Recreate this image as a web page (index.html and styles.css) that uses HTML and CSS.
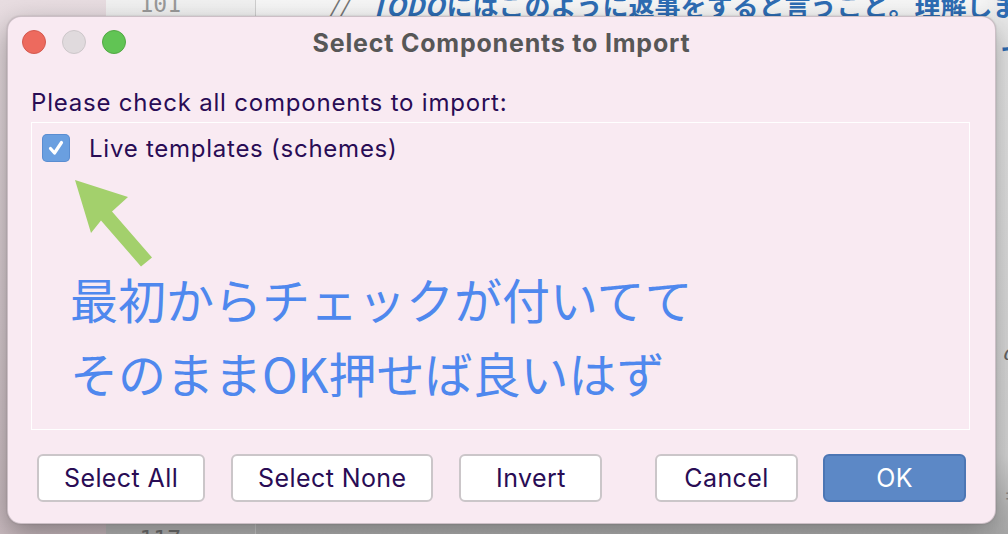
FILE: index.html
```html
<!DOCTYPE html>
<html lang="ja">
<head>
<meta charset="utf-8">
<title>Select Components to Import</title>
<link rel="stylesheet" href="styles.css">
</head>
<body>
<div class="desk">
  <div class="side"></div>
  <div class="gutter">
    <div class="ln">101</div>
    <div class="ln">117</div>
  </div>
  <div class="code">
    <div class="code-line"><span class="cm">//</span><span class="todo">TODO</span><span class="jp">にはこのように返事をすると言うこと。理解しま</span></div>
    <div class="edge">
      <span class="e1">て</span>
      <span class="e2">ヽ5</span>
      <span class="e3">・</span>
      <span class="e4">ヽ</span>
      <span class="e5">ご</span>
      <span class="e6">ad</span>
      <span class="e7">=</span>
    </div>
  </div>
</div>

<div class="dialog">
  <div class="titlebar">
    <div class="lights">
      <span class="light red"></span>
      <span class="light gray"></span>
      <span class="light green"></span>
    </div>
    <div class="title">Select Components to Import</div>
  </div>
  <div class="content">
    <div class="prompt">Please check all components to import:</div>
    <div class="list">
      <div class="item">
        <span class="check">
          <svg width="28" height="28" viewBox="0 0 28 28"><path d="M8.5 14.5 L12.5 19 L19.5 8.5" fill="none" stroke="#fff" stroke-width="3.2" stroke-linecap="round" stroke-linejoin="round"/></svg>
        </span>
        <span class="item-label">Live templates (schemes)</span>
      </div>
      <svg class="arrow" width="180" height="180" viewBox="0 0 180 180"><polygon points="43,57 96,74 80,88.5 120,134.5 109,143.5 69,97.5 59,110" fill="#a3d06c"/></svg>
      <div class="note">
        <div class="note-line">最初からチェックが付いてて</div>
        <div class="note-line">そのままOK押せば良いはず</div>
      </div>
    </div>
  </div>
  <div class="buttons">
    <div class="group">
      <button class="btn">Select All</button>
      <button class="btn">Select None</button>
      <button class="btn">Invert</button>
    </div>
    <div class="group">
      <button class="btn">Cancel</button>
      <button class="btn primary">OK</button>
    </div>
  </div>
</div>
</body>
</html>
```

FILE: styles.css
```css
html, body {
  margin: 0;
  padding: 0;
}
body {
  width: 1008px;
  height: 534px;
  overflow: hidden;
  position: relative;
  font-family: Inter, "Liberation Sans", "Noto Sans CJK JP", sans-serif;
  background: #e6e6e6;
}

/* background editor */
.desk {
  display: grid;
  grid-template-columns: 106px 150px 1fr;
  height: 534px;
}
.side {
  background: linear-gradient(180deg, #e8dde1 0%, #d8cbd0 60%, #cbbcc1 100%);
}
.gutter {
  background: linear-gradient(180deg, #f1f1f1 0%, #e4e4e4 85%, #b8b8b8 100%);
  border-right: 1px solid #cfcfcf;
  display: flex;
  flex-direction: column;
  justify-content: space-between;
  align-items: flex-end;
  padding-right: 74px;
  font-family: "DejaVu Sans Mono", monospace;
  font-size: 23px;
  color: #9a9a9a;
}
.gutter .ln:first-child { margin-top: -9px; }
.gutter .ln:last-child { margin-bottom: -18px; color: #707070; }
.code {
  background: linear-gradient(90deg, rgba(0,0,0,0) 0%, rgba(0,0,0,0) 95%, rgba(0,0,0,0.08) 100%),
              linear-gradient(180deg, #f6f6f6 0%, #e2e2e2 85%, #b4b4b4 100%);
  position: relative;
}
.code-line {
  margin-top: -12px;
  margin-left: 72px;
  white-space: nowrap;
  font-family: "Noto Sans CJK JP", sans-serif;
  font-weight: 700;
  font-size: 26px;
  line-height: 34px;
  color: #2e6db4;
}
.code-line .cm { color: #777; font-weight: 400; font-style: italic; margin-right: 22px; }
.code-line .todo { font-style: italic; letter-spacing: 0; margin-right: 2px; }
.edge {
  position: absolute;
  right: 0;
  top: 0;
  width: 30px;
  height: 534px;
  font-family: "Noto Sans CJK JP", sans-serif;
  color: #666;
  font-size: 22px;
}
.edge span { position: absolute; left: 17px; white-space: nowrap; }
.edge .e1 { top: 36px; color: #2e6db4; font-weight: 700; font-size: 26px; left: 12px; }
.edge .e2 { top: 168px; }
.edge .e3 { top: 223px; }
.edge .e4 { top: 269px; }
.edge .e5 { top: 299px; }
.edge .e6 { top: 340px; font-style: italic; font-family: "DejaVu Serif", serif; left: 15px; }
.edge .e7 { top: 478px; color: #888; }

/* dialog */
.dialog {
  position: absolute;
  left: 7px;
  top: 16px;
  width: 989px;
  height: 508px;
  box-sizing: border-box;
  background: #f9eaf2;
  border: 1px solid rgba(0, 0, 0, 0.18);
  border-radius: 14px;
  box-shadow: 0 10px 28px rgba(0, 0, 0, 0.35), 0 0 2px rgba(0, 0, 0, 0.2);
  display: flex;
  flex-direction: column;
}
.titlebar {
  height: 51px;
  position: relative;
  display: flex;
  align-items: center;
  justify-content: center;
}
.lights {
  position: absolute;
  left: 14px;
  top: 13px;
  display: flex;
  gap: 16px;
}
.light {
  width: 24px;
  height: 24px;
  border-radius: 50%;
  box-sizing: border-box;
}
.light.red { background: #ed6a5e; border: 1px solid #d4594f; }
.light.gray { background: #e0dadd; border: 1px solid #cdc7ca; }
.light.green { background: #61c454; border: 1px solid #52a844; }
.title {
  font-weight: 700;
  font-size: 25px;
  letter-spacing: 0.8px;
  color: #575757;
  margin-top: 1px;
}
.content {
  padding: 22px 25px 0 23px;
}
.prompt {
  font-size: 24px;
  letter-spacing: 0.8px;
  line-height: 26px;
  color: #290c55;
}
.list {
  margin-top: 6px;
  height: 308px;
  box-sizing: border-box;
  border: 1px solid #ffffff;
  position: relative;
  padding: 11px 10px 0;
}
.item {
  display: flex;
  align-items: center;
  gap: 19px;
  height: 28px;
}
.check {
  width: 28px;
  height: 28px;
  border-radius: 5px;
  background: #6a9fe0;
  box-shadow: inset 0 0 0 1px rgba(60, 110, 180, 0.35);
  display: block;
}
.check svg { display: block; }
.item-label {
  font-size: 24px;
  letter-spacing: 0.75px;
  color: #290c55;
}
.arrow {
  position: absolute;
  left: 0;
  top: 0;
  width: 180px;
  height: 180px;
}
.note {
  margin-top: 99px;
  margin-left: 28px;
  font-family: "Noto Sans CJK JP", sans-serif;
  font-size: 48px;
  line-height: 74px;
  color: #4f88ee;
  white-space: nowrap;
}
.buttons {
  margin-top: 24px;
  padding: 0 29px 0 29px;
  display: flex;
  justify-content: space-between;
}
.group {
  display: flex;
  gap: 26px;
}
.group + .group { gap: 25px; }
.btn {
  font-family: Inter, "Liberation Sans", sans-serif;
  font-size: 25px;
  letter-spacing: 0.4px;
  color: #290c55;
  height: 48px;
  min-width: 143px;
  padding: 0 25px;
  background: #ffffff;
  border: 2px solid #cbc6c9;
  border-radius: 6px;
  box-sizing: border-box;
}
.btn.primary {
  background: #5c88c6;
  border-color: #4c76b4;
  color: #ffffff;
}
```
